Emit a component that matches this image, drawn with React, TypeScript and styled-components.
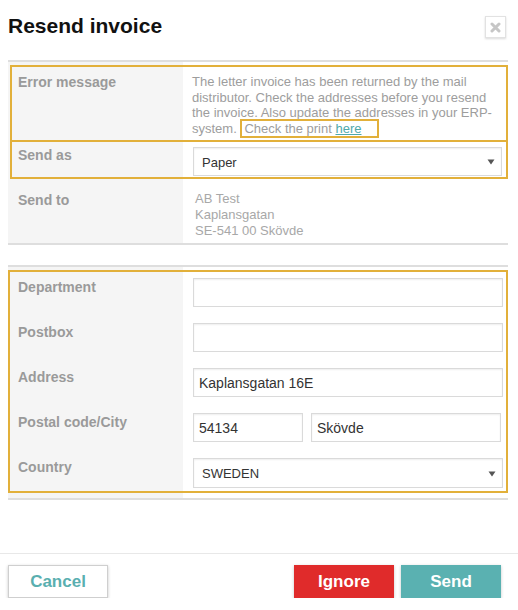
import React from "react";
import styled, { createGlobalStyle } from "styled-components";

const GlobalStyle = createGlobalStyle`
  html, body { margin: 0; padding: 0; background: #fff; }
  body { font-family: "Liberation Sans", Arial, sans-serif; }
  * { box-sizing: border-box; }
`;

const HIGHLIGHT = "#e2b03a";

const Modal = styled.div`
  width: 518px;
  font-family: "Liberation Sans", Arial, sans-serif;
`;

const Header = styled.div`
  display: flex;
  justify-content: space-between;
  align-items: flex-start;
  padding: 14px 12px 0 8px;
`;

const Title = styled.h1`
  margin: 0;
  font-size: 21px;
  line-height: 24px;
  font-weight: bold;
  color: #111;
`;

const CloseButton = styled.button`
  width: 21px;
  height: 22px;
  margin-top: 2px;
  padding: 0;
  border: 1px solid #e2e2e2;
  background: #fff;
  box-shadow: 0 1px 2px rgba(0, 0, 0, 0.15);
  display: flex;
  align-items: center;
  justify-content: center;
`;

const Body = styled.div`
  padding: 22px 10px 0 8px;
`;

const Section = styled.div<{ $top?: number; $bottom?: number }>`
  margin-top: ${(p) => p.$top ?? 0}px;
  border-top: 2px solid #dedede;
  border-bottom: 2px solid #dedede;
  padding-top: 3px;
  padding-bottom: ${(p) => p.$bottom ?? 0}px;
  background: linear-gradient(to right, #f5f5f5 175px, #fff 175px);
`;

const HighlightBox = styled.div<{ $inset?: boolean; $noTop?: boolean }>`
  margin-left: ${(p) => (p.$inset ? 2 : 0)}px;
  border: 2px solid ${HIGHLIGHT};
  border-top-width: ${(p) => (p.$noTop ? 0 : 2)}px;
`;

const Row = styled.div<{ $labelWidth: number; $pt: number; $pb: number }>`
  display: grid;
  grid-template-columns: ${(p) => p.$labelWidth}px 1fr;
  padding-top: ${(p) => p.$pt}px;
  padding-bottom: ${(p) => p.$pb}px;
`;

const Label = styled.div<{ $left: number; $top?: number }>`
  padding-left: ${(p) => p.$left}px;
  padding-top: ${(p) => p.$top ?? 0}px;
  font-size: 14px;
  line-height: 16px;
  font-weight: bold;
  color: #9a9a9a;
`;

const Value = styled.div<{ $left: number; $right?: number }>`
  padding-left: ${(p) => p.$left}px;
  padding-right: ${(p) => p.$right ?? 4}px;
`;

const Message = styled.p`
  margin: 0;
  font-size: 13px;
  line-height: 15.5px;
  color: #9d9d9d;
`;

const PrintHint = styled.span`
  border: 2px solid ${HIGHLIGHT};
  padding: 0 15px 0 2px;
`;

const Link = styled.a`
  color: #4fa9ab;
  text-decoration: underline;
`;

const AddressText = styled.div`
  padding-top: 12px;
  font-size: 13px;
  line-height: 16px;
  color: #a8a8a8;
`;

const SelectBox = styled.div<{ $h: number }>`
  height: ${(p) => p.$h}px;
  border: 1px solid #dadada;
  background: #fff;
  box-shadow: inset 0 1px 2px rgba(0, 0, 0, 0.07);
  display: flex;
  align-items: center;
  justify-content: space-between;
  padding: 1px 6px 0 8px;
  font-size: 13px;
  color: #333;
`;

const TextInput = styled.input`
  display: block;
  width: 100%;
  height: 29px;
  border: 1px solid #dadada;
  background: #fff;
  box-shadow: inset 0 1px 2px rgba(0, 0, 0, 0.07);
  padding: 1px 5px 0;
  font-family: "Liberation Sans", Arial, sans-serif;
  font-size: 14px;
  color: #333;
  outline: none;
`;

const CityGrid = styled.div`
  display: grid;
  grid-template-columns: 110px 190px;
  column-gap: 8px;
`;

const Footer = styled.div`
  margin-top: 53px;
  border-top: 1px solid #e8e8e8;
  padding: 11px 17px 0 8px;
  display: flex;
  align-items: center;
  gap: 7px;
`;

const Spacer = styled.div`
  flex: 1;
`;

const Button = styled.button<{ $variant: "cancel" | "danger" | "primary" }>`
  width: 100px;
  height: 33px;
  padding: 0;
  font-family: "Liberation Sans", Arial, sans-serif;
  font-size: 17px;
  font-weight: bold;
  cursor: pointer;
  border: ${(p) => (p.$variant === "cancel" ? "1px solid #cfcfcf" : "none")};
  background: ${(p) =>
    p.$variant === "cancel" ? "#fff" : p.$variant === "danger" ? "#e02b2b" : "#5ab1b1"};
  color: ${(p) => (p.$variant === "cancel" ? "#5aafb0" : "#fff")};
  box-shadow: 0 1px 3px rgba(0, 0, 0, 0.22);
`;

const Caret = () => (
  <svg width="8" height="6" viewBox="0 0 8 6">
    <path d="M0.5 0.5 H7.5 L4 5.5 Z" fill="#555" />
  </svg>
);

const CloseIcon = () => (
  <svg width="11" height="11" viewBox="0 0 11 11">
    <path d="M2 2 L9 9 M9 2 L2 9" stroke="#c6c6c6" strokeWidth="3" strokeLinecap="round" />
  </svg>
);

export default function App() {
  return (
    <>
      <GlobalStyle />
      <Modal>
        <Header>
          <Title>Resend invoice</Title>
          <CloseButton aria-label="Close">
            <CloseIcon />
          </CloseButton>
        </Header>
        <Body>
          <Section>
            <HighlightBox $inset>
              <Row $labelWidth={171} $pt={7} $pb={4}>
                <Label $left={6}>Error message</Label>
                <Value $left={9}>
                  <Message>
                    The letter invoice has been returned by the mail distributor. Check the
                    addresses before you resend the invoice. Also update the addresses in your
                    ERP-system.{" "}
                    <PrintHint>
                      Check the print <Link href="#">here</Link>
                    </PrintHint>
                  </Message>
                </Value>
              </Row>
            </HighlightBox>
            <HighlightBox $inset $noTop>
              <Row $labelWidth={171} $pt={5} $pb={1}>
                <Label $left={6}>Send as</Label>
                <Value $left={10}>
                  <SelectBox $h={29}>
                    <span>Paper</span>
                    <Caret />
                  </SelectBox>
                </Value>
              </Row>
            </HighlightBox>
            <Row $labelWidth={175} $pt={0} $pb={4}>
              <Label $left={10} $top={13}>
                Send to
              </Label>
              <Value $left={12}>
                <AddressText>
                  AB Test
                  <br />
                  Kaplansgatan
                  <br />
                  SE-541 00 Skövde
                </AddressText>
              </Value>
            </Row>
          </Section>

          <Section $top={20} $bottom={5}>
            <HighlightBox>
              <Row $labelWidth={173} $pt={6} $pb={10}>
                <Label $left={8} $top={1}>Department</Label>
                <Value $left={10} $right={3}>
                  <TextInput defaultValue="" />
                </Value>
              </Row>
              <Row $labelWidth={173} $pt={6} $pb={10}>
                <Label $left={8} $top={1}>Postbox</Label>
                <Value $left={10} $right={3}>
                  <TextInput defaultValue="" />
                </Value>
              </Row>
              <Row $labelWidth={173} $pt={6} $pb={10}>
                <Label $left={8} $top={1}>Address</Label>
                <Value $left={10} $right={3}>
                  <TextInput defaultValue="Kaplansgatan 16E" />
                </Value>
              </Row>
              <Row $labelWidth={173} $pt={6} $pb={10}>
                <Label $left={8} $top={1}>Postal code/City</Label>
                <Value $left={10} $right={3}>
                  <CityGrid>
                    <TextInput defaultValue="54134" />
                    <TextInput defaultValue="Skövde" />
                  </CityGrid>
                </Value>
              </Row>
              <Row $labelWidth={173} $pt={6} $pb={3}>
                <Label $left={8} $top={1}>Country</Label>
                <Value $left={10} $right={3}>
                  <SelectBox $h={30}>
                    <span>SWEDEN</span>
                    <Caret />
                  </SelectBox>
                </Value>
              </Row>
            </HighlightBox>
          </Section>
        </Body>
        <Footer>
          <Button $variant="cancel">Cancel</Button>
          <Spacer />
          <Button $variant="danger">Ignore</Button>
          <Button $variant="primary">Send</Button>
        </Footer>
      </Modal>
    </>
  );
}
